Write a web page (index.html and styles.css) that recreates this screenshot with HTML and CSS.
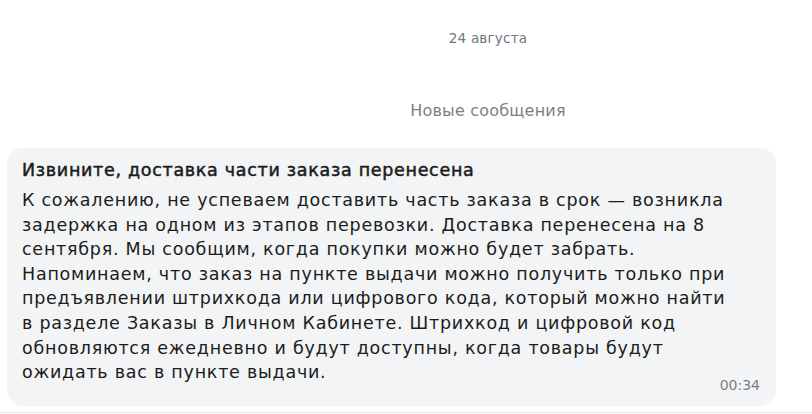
FILE: index.html
```html
<!DOCTYPE html>
<html lang="ru">
<head>
<meta charset="utf-8">
<link rel="stylesheet" href="styles.css">
</head>
<body>
<div class="chat">
  <div class="date">24 августа</div>
  <div class="new">Новые сообщения</div>
  <div class="bubble">
    <div class="title">Извините, доставка части заказа перенесена</div>
    <div class="text">К сожалению, не успеваем доставить часть заказа в срок — возникла<br>задержка на одном из этапов перевозки. Доставка перенесена на 8<br>сентября. Мы сообщим, когда покупки можно будет забрать.<br>Напоминаем, что заказ на пункте выдачи можно получить только при<br>предъявлении штрихкода или цифрового кода, который можно найти<br>в разделе Заказы в Личном Кабинете. Штрихкод и цифровой код<br>обновляются ежедневно и будут доступны, когда товары будут<br>ожидать вас в пункте выдачи.</div>
    <div class="time">00:34</div>
  </div>
  <div class="line"></div>
</div>
</body>
</html>
```
FILE: styles.css
```css
html, body {
  margin: 0;
  padding: 0;
  background: #ffffff;
}
body {
  font-family: "DejaVu Sans", "Noto Sans", sans-serif;
  width: 812px;
  height: 414px;
  overflow: hidden;
}
.chat {
  display: flex;
  flex-direction: column;
  padding: 0 36px 0 7px;
}
.date {
  align-self: center;
  margin: 29px 0 0 193px;
  font-size: 13.5px;
  letter-spacing: 0.2px;
  line-height: 18px;
  color: #6e7680;
}
.new {
  align-self: center;
  margin: 54px 0 0 193px;
  font-size: 16px;
  letter-spacing: 0.2px;
  line-height: 20px;
  color: #7b7f85;
}
.bubble {
  margin-top: 27px;
  background: #f2f4f5;
  border-radius: 16px;
  padding: 10px 16px 13px 15px;
  color: #1c1c1c;
}
.title {
  font-size: 17.5px;
  font-weight: 400;
  line-height: 24px;
  letter-spacing: 0.7px;
  -webkit-text-stroke: 0.5px #1c1c1c;
  color: #1c1c1c;
}
.text {
  font-size: 17.5px;
  line-height: 24.6px;
  margin-top: 6px;
  letter-spacing: 0.75px;
  white-space: nowrap;
}
.time {
  text-align: right;
  font-size: 14px;
  line-height: 16px;
  color: #7b7f85;
  margin-top: -8px;
}
.line {
  margin: 6px -36px 0 -7px;
  height: 1px;
  background: #e6e6e6;
}
```
